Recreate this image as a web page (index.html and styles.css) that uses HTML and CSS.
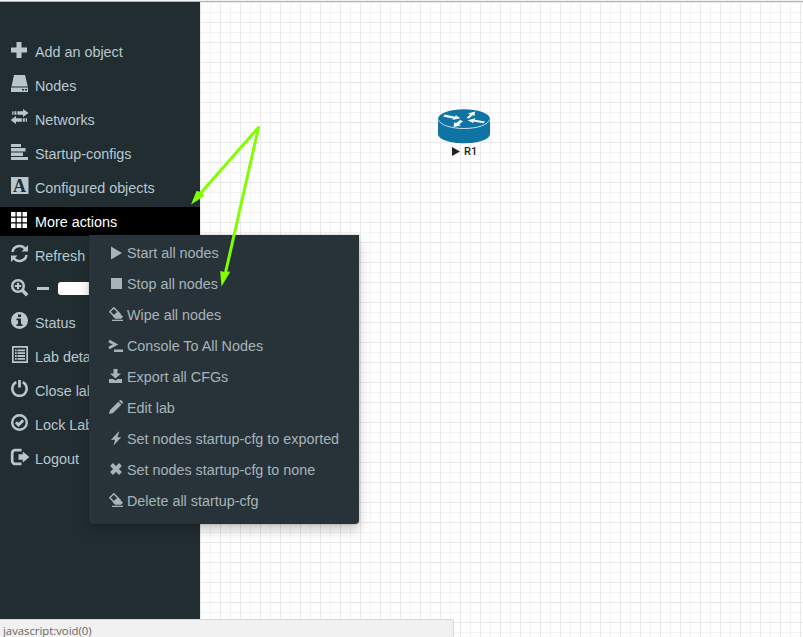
FILE: index.html
```
<!DOCTYPE html>
<html lang="en">
<head>
<meta charset="utf-8">
<title>Lab</title>
<link rel="stylesheet" href="styles.css">
</head>
<body>
<svg class="defs" width="0" height="0">
  <symbol id="eraser" viewBox="0 0 14 14">
    <path d="M4.800.8.8 4.800 6.800 10.800 10.800 6.800Z" fill="none" stroke="currentColor" stroke-width="1.500" stroke-linejoin="round"/>
    <path d="M8.700 4.500 14 9.500 12.200 11.800H6.300L3.500 9Z" fill="currentColor"/>
    <path d="M3 12.700h11V14H3z" fill="currentColor"/>
  </symbol>
</svg>
<div class="app">
  <nav class="sidebar">
    <ul class="menu">
      <li class="item"><svg class="icon" viewBox="0 0 18 18"><path d="M5.500 1h5v5.500H16v5h-5.500V17h-5v-5.500H0v-5h5.500z" /></svg><span>Add an object</span></li>
      <li class="item"><svg class="icon" viewBox="0 0 18 18"><path d="M3 0h11l2.800 11.500H.5z"/><path fill-rule="evenodd" d="M0 12.500h17V17H0zM11 14v1.500h2V14zm3 0v1.500h2V14z"/></svg><span>Nodes</span></li>
      <li class="item"><svg class="icon" viewBox="0 0 18 18"><path d="M1.200 2.200h1.300v3.600H1.200zm2.200 0h2v3.600h-2zm3 0H12V0l5.500 4L12 8V5.800H6.400zM16 9.200h-1.300v3.600H16zm-2.200 0h-2v3.600h2zm-3 0H5V7L-.3 11 5 15v-2.200h5.800z"/></svg><span>Networks</span></li>
      <li class="item"><svg class="icon" viewBox="0 0 18 18"><path d="M0 1h10v3H0zm0 4h14.500v3.500H0zM0 9.500h12V13H0zM0 14h17v3H0z"/></svg><span>Startup-configs</span></li>
      <li class="item"><svg class="icon" viewBox="0 0 18 18"><path d="M0 0h17.500v17H0z"/><text class="icon-letter" x="8.600" y="14.500">A</text></svg><span>Configured objects</span></li>
      <li class="item active"><svg class="icon" viewBox="0 0 18 18"><path d="M0 1h4.500v4.500H0zm5.700 0h4.600v4.500H5.700zm5.800 0H16v4.500h-4.500zM0 6.700h4.500v4.500H0zm5.700 0h4.600v4.500H5.700zm5.800 0H16v4.500h-4.500zM0 12.500h4.500V17H0zm5.700 0h4.600V17H5.700zm5.800 0H16V17h-4.500z"/></svg><span>More actions</span></li>
      <li class="item"><svg class="icon" viewBox="0 0 18 18"><g fill="none" stroke="currentColor" stroke-width="2.400"><path d="M1.500 7A7 7 0 0 1 14 3.800"/><path d="M15.500 10A7 7 0 0 1 3 13.200"/></g><path d="M17 0v6.500h-6.500zM0 17v-6.500h6.500z"/></svg><span>Refresh</span></li>
      <li class="item zoom"><svg class="icon" viewBox="0 0 18 18"><g fill="none" stroke="currentColor"><circle cx="7" cy="7" r="5.800" stroke-width="2.500"/><path d="m11.500 11.500 4.700 4.700" stroke-width="3.500"/><path d="M7 3.800v6.400M3.800 7h6.400" stroke-width="2.200"/></g></svg><span class="minus"></span><span class="slider"></span></li>
      <li class="item"><svg class="icon" viewBox="0 0 18 18"><path fill-rule="evenodd" d="M8.500 0a8.500 8.500 0 1 0 0 17 8.500 8.500 0 0 0 0-17zM7 2.500h3V5H7zM5.500 6.500H10v5.800h1.500V14h-6v-1.700H7V8.200H5.500z"/></svg><span>Status</span></li>
      <li class="item"><svg class="icon" viewBox="0 0 18 18"><path fill-rule="evenodd" d="M1 0h16v17H1zM2.700 1.700v13.600h12.600V1.700z"/><path d="M4 3.500h1.700v1.800H4zm2.500 0H14v1.800H6.500zM4 6.300h1.700v1.800H4zm2.500 0H14v1.800H6.500zM4 9.100h1.700v1.800H4zm2.500 0H14v1.800H6.500zM4 12h1.700v1.800H4zm2.500 0H14v1.800H6.500z"/></svg><span>Lab details</span></li>
      <li class="item"><svg class="icon" viewBox="0 0 18 18"><g fill="none" stroke="currentColor" stroke-width="2.500"><path d="M5.300 2.200a7.200 7.200 0 1 0 6.400 0"/><path d="M8.500 0v7.500" stroke-width="2.800"/></g></svg><span>Close lab</span></li>
      <li class="item"><svg class="icon" viewBox="0 0 18 18"><g fill="none" stroke="currentColor"><circle cx="8.500" cy="8.500" r="7.300" stroke-width="2.400"/><path d="m5 8.200 2.600 2.600 4.600-4.600" stroke-width="3"/></g></svg><span>Lock Lab</span></li>
      <li class="item"><svg class="icon" viewBox="0 0 18 18"><path d="M10.500 2.200H4A2.800 2.800 0 0 0 1.200 5v8A2.800 2.800 0 0 0 4 15.800h6.500" fill="none" stroke="currentColor" stroke-width="2.700"/><path d="M7.500 6.300h4.300V3.500L18.300 9l-6.500 5.500v-2.800H7.500z"/></svg><span>Logout</span></li>
    </ul>
  </nav>
  <main class="canvas">
    <div class="node">
      <svg class="router" viewBox="0 0 52 35">
        <path d="M0 9.500V25c0 5.200 11.600 9.300 26 9.300S52 30.200 52 25V9.500z" fill="#0f73a3"/>
        <ellipse cx="26" cy="9.700" rx="25.800" ry="9.400" fill="#0f73a3"/>
        <path d="M.3 10.500C1.300 15.600 12.500 19.500 26 19.500s24.700-3.900 25.700-9" fill="none" stroke="#c9e1eb" stroke-width="1"/>
        <g fill="#fff"><path d="m5 7.600 10.500 2.200-1.300 1.200 8.300-1.700-4.700-3-.8 1.400L7 5.600z"/><path d="m45.500 14.300-9.800-1.900-.6 1.600-5.400-2.800 7.800-2-.7 1.500 10.300 1.900z"/><path d="m28.500 8.700 3.800-3.300-2.500-1 7.400-2-.8 4.600-1.800-.8-3.800 3.400z"/><path d="m25 12.200-4 3.300 2 .9-7.500 1.600.8-4.700 1.800.8 4-3.200z"/></g>
      </svg>
      <div class="node-label"><svg class="run" viewBox="0 0 9 10"><path d="M0 0 9 5 0 10z"/></svg><span>R1</span></div>
    </div>
  </main>
</div>

<ul class="dropdown">
  <li><svg viewBox="0 0 14 14"><path d="M2 1.500 13 8 2 14.500z"/></svg>Start all nodes</li>
  <li><svg viewBox="0 0 14 14"><path d="M2 2h11v11H2z"/></svg>Stop all nodes</li>
  <li><svg><use href="#eraser"/></svg>Wipe all nodes</li>
  <li><svg viewBox="0 0 14 14"><path d="m0 3 6.500 3.500L0 10" fill="none" stroke="currentColor" stroke-width="2.600"/><path d="M5 11.500h9V14H5z"/></svg>Console To All Nodes</li>
  <li><svg viewBox="0 0 14 14"><path d="M4.500 0h4v4.500H12L6.500 9.500 1 4.500h3.500zM0 10h4l2.500 1.500L9 10h4v4H0z"/></svg>Export all CFGs</li>
  <li><svg viewBox="0 0 14 14"><path d="m0 14 1-4L9.300 1.800l3 3L4 13zM10 1l.8-.7q.7-.5 1.400 0l1.500 1.500q.5.700 0 1.400L13 4z"/></svg>Edit lab</li>
  <li><svg viewBox="0 0 14 14"><path d="M9.500.8 2 8.800h4L4.500 14.500 12.200 6.300H8.300L10.300.8z"/></svg>Set nodes startup-cfg to exported</li>
  <li><svg viewBox="0 0 14 14"><path d="m2.500 2.500 9 9m0-9-9 9" fill="none" stroke="currentColor" stroke-width="4"/></svg>Set nodes startup-cfg to none</li>
  <li><svg><use href="#eraser"/></svg>Delete all startup-cfg</li>
</ul>

<svg class="arrows" viewBox="0 0 803 637">
  <path d="M199 195 258.500 127.500 225 275" fill="none" stroke="#80ff00" stroke-width="3" stroke-linejoin="round"/>
  <path d="m191 204.500 5.500-13.500 3 .5 4.500 3.500-.5 1.500zM221.500 286.500 220.200 271l4.300 1 5.500-.5-.5 1.500z" fill="#80ff00"/>
</svg>
<div class="statusbar">javascript:void(0)</div>
</body>
</html>
```

FILE: styles.css
```
* { box-sizing: border-box; }

body {
  margin: 0;
  width: 803px;
  height: 637px;
  overflow: hidden;
  position: relative;
  font-family: "Liberation Sans", Arial, sans-serif;
  font-size: 14.35px;
  background: #fff;
}

.defs { position: absolute; }

ul { list-style: none; margin: 0; padding: 0; }

svg { fill: currentColor; flex: none; overflow: visible; }

.app {
  display: flex;
  height: 637px;
  border-top: 1px solid #f2f2f2;
}

.sidebar {
  width: 200px;
  padding-top: 35px;
  background: #222d32;
  border-top: 1px solid #b4b4b4;
  color: #b8c7ce;
}

.item {
  display: flex;
  height: 29px;
  margin-bottom: 5px;
  padding: 0 11px;
  line-height: 30px;
  white-space: nowrap;
}

.item.active { background: #000; color: #fff; }

.icon { width: 18px; height: 18px; margin: 4px 6px 0 0; }

.icon-letter {
  font: bold 18px "Liberation Serif", serif;
  text-anchor: middle;
  fill: #222d32;
}

.zoom { height: 28px; }

.minus {
  width: 12px;
  height: 3px;
  margin: 12px 9px 0 2px;
  background: #b8c7ce;
}

.slider {
  width: 100px;
  height: 13px;
  margin-top: 7px;
  border-radius: 3px;
  background: #fff;
}

.canvas {
  flex: 1;
  border-top: 1px solid #b4b4b4;
  background-image:
    linear-gradient(#e9e9e9 1px, transparent 1px),
    linear-gradient(90deg, #e9e9e9 1px, transparent 1px),
    linear-gradient(#f3f3f3 1px, transparent 1px),
    linear-gradient(90deg, #f3f3f3 1px, transparent 1px);
  background-size: 20px 20px, 20px 20px, 10px 10px, 10px 10px;
}

.node {
  width: 52px;
  margin: 107px 0 0 238px;
}

.router { display: block; width: 52px; height: 35px; }

.node-label {
  display: flex;
  align-items: center;
  gap: 4px;
  height: 15px;
  padding-left: 14px;
  font: 500 11px Roboto, sans-serif;
  color: #222;
}

.run { width: 8px; height: 9px; }

.dropdown {
  position: absolute;
  left: 89px;
  top: 235px;
  width: 270px;
  height: 289px;
  padding: 3px 0 0 20px;
  border-radius: 0 0 4px 4px;
  background: #283339;
  color: #a6b3b9;
  box-shadow: 0 6px 12px rgba(0, 0, 0, 0.22), 0 0 2px rgba(0, 0, 0, 0.3);
}

.dropdown li {
  display: flex;
  height: 31px;
  line-height: 31px;
  white-space: nowrap;
}

.dropdown svg { width: 14px; height: 14px; margin: 7px 4px 0 0; }

.arrows {
  position: absolute;
  left: 0;
  top: 0;
  width: 803px;
  height: 637px;
}

.statusbar {
  position: absolute;
  left: 0;
  bottom: 0;
  width: 454px;
  height: 18px;
  padding-left: 3px;
  border-top: 1px solid #d8d8d8;
  border-right: 1px solid #d8d8d8;
  border-radius: 0 3px 0 0;
  background: #f1f1f1;
  color: #666;
  font: 11.3px/22px "Open Sans", sans-serif;
}
```
